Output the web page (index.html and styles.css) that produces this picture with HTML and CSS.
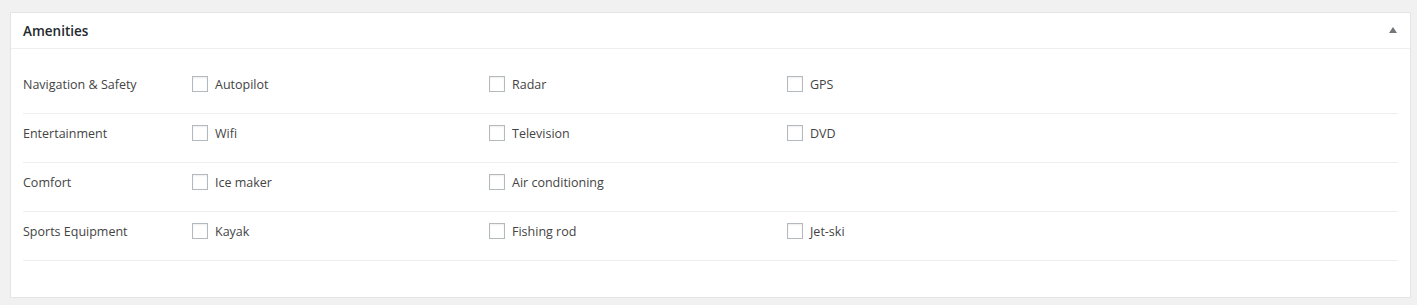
FILE: index.html
```html
<!DOCTYPE html>
<html lang="en">
<head>
<meta charset="utf-8">
<title>Amenities</title>
<link rel="stylesheet" href="styles.css">
</head>
<body>
<div class="postbox">
  <div class="postbox-header">
    <h2 class="hndle">Amenities</h2>
    <button class="toggle" type="button" aria-label="Toggle panel">
      <svg width="8" height="6" viewBox="0 0 8 6"><path d="M4 0 L8 6 L0 6 Z" fill="#72777c"/></svg>
    </button>
  </div>
  <div class="inside">
    <div class="row">
      <div class="row-label">Navigation &amp; Safety</div>
      <label class="opt"><span class="cb"></span>Autopilot</label>
      <label class="opt"><span class="cb"></span>Radar</label>
      <label class="opt"><span class="cb"></span>GPS</label>
    </div>
    <div class="row">
      <div class="row-label">Entertainment</div>
      <label class="opt"><span class="cb"></span>Wifi</label>
      <label class="opt"><span class="cb"></span>Television</label>
      <label class="opt"><span class="cb"></span>DVD</label>
    </div>
    <div class="row">
      <div class="row-label">Comfort</div>
      <label class="opt"><span class="cb"></span>Ice maker</label>
      <label class="opt"><span class="cb"></span>Air conditioning</label>
    </div>
    <div class="row">
      <div class="row-label">Sports Equipment</div>
      <label class="opt"><span class="cb"></span>Kayak</label>
      <label class="opt"><span class="cb"></span>Fishing rod</label>
      <label class="opt"><span class="cb"></span>Jet-ski</label>
    </div>
  </div>
</div>
</body>
</html>
```
FILE: styles.css
```css
* { box-sizing: border-box; }
html, body {
  margin: 0;
  background: #f1f1f1;
}
body {
  padding: 12px 6px 0 10px;
  font-family: "Open Sans", "Noto Sans", sans-serif;
  font-size: 12.5px;
  color: #444;
}
.postbox {
  background: #fff;
  border: 1px solid #e5e5e5;
  box-shadow: 0 1px 1px rgba(0,0,0,.04);
  width: 1401px;
}
.postbox-header {
  display: flex;
  align-items: center;
  justify-content: space-between;
  height: 36px;
  border-bottom: 1px solid #eee;
  padding: 0 13px 0 12px;
}
.hndle {
  margin: 0;
  font-size: 13.5px;
  font-weight: 600;
  color: #23282d;
  line-height: 19px;
  padding-top: 1px;
}
.toggle {
  border: 0;
  background: none;
  padding: 0;
  margin: 0 0 1px 0;
  width: 8px;
  height: 6px;
  display: flex;
}
.inside {
  padding: 16px 12px 36px;
}
.row {
  display: grid;
  grid-template-columns: 169px 297px 298px 1fr;
  align-items: start;
  padding: 11px 0 0;
  border-bottom: 1px solid #eee;
  height: 49px;
}
.row-label {
  line-height: 18px;
}
.opt {
  display: flex;
  align-items: flex-start;
  gap: 7px;
  line-height: 18px;
}
.cb {
  width: 16px;
  height: 16px;
  border: 1px solid #b4b9be;
  background: #fff;
  box-shadow: inset 0 1px 2px rgba(0,0,0,.07);
  flex: none;
}
```
